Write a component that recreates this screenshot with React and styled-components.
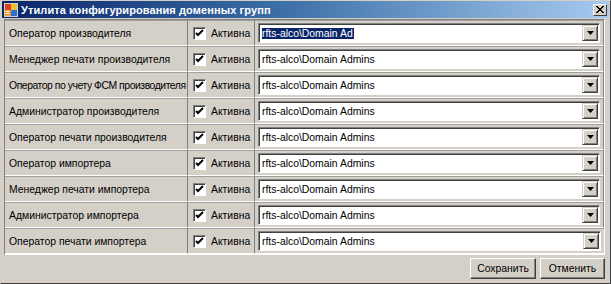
import React from "react";
import styled, { createGlobalStyle } from "styled-components";

const Global = createGlobalStyle`
  html, body { margin: 0; padding: 0; background: #d4d0c8; }
  body { font-family: "Liberation Sans", Arial, sans-serif; font-size: 10.4px; color: #000; }
`;

const Window = styled.div`
  width: 611px;
  height: 284px;
  box-sizing: border-box;
  background: #d4d0c8;
  border: 1px solid #d4d0c8;
  border-right-color: #404040;
  border-bottom-color: #404040;
  display: flex;
  flex-direction: column;
`;

const TitleBar = styled.div`
  height: 17px;
  margin: 0 1px;
  background: linear-gradient(to right, #0a246a, #3a6ea5 45%, #a6caf0);
  display: flex;
  align-items: center;
  padding: 0 2px;
  gap: 3px;
`;

const Title = styled.div`
  flex: 1;
  color: #fff;
  font-weight: bold;
  font-size: 11px;
  letter-spacing: 0.1px;
`;

const CloseBtn = styled.div`
  width: 14px;
  height: 12px;
  box-sizing: border-box;
  background: #d4d0c8;
  border: 1px solid;
  border-color: #fff #404040 #404040 #fff;
  display: flex;
  align-items: center;
  justify-content: center;
`;

const Body = styled.div`
  flex: 1;
  display: flex;
  flex-direction: column;
  padding: 1px 5px 4px 3px;
`;

const Grid = styled.div`
  border: 1px solid;
  border-color: #808080 #fff #fff #808080;
  display: grid;
  grid-template-columns: 183px 67px 1fr;
  grid-auto-rows: 26px;
`;

const Cell = styled.div`
  box-sizing: border-box;
  display: flex;
  align-items: center;
  white-space: nowrap;
  overflow: hidden;
  border-right: 1px solid #808080;
  border-bottom: 1px solid #fff;
  border-top: 1px solid #a0a0a0;
  padding: ${(p) => p.$pad || "0 4px"};
  &:last-child { border-right: none; }
`;

const Label = styled(Cell)`
  padding: 0 2px 0 4px;
  letter-spacing: ${(p) => (p.$tight ? "-0.45px" : "0")};
`;

const Check = styled.div`
  width: 13px;
  height: 13px;
  box-sizing: border-box;
  background: #fff;
  border: 1px solid;
  border-color: #808080 #fff #fff #808080;
  box-shadow: inset 1px 1px 0 #404040;
  display: flex;
  align-items: center;
  justify-content: center;
  margin-right: 5px;
`;

const Combo = styled.div`
  flex: 1;
  height: 20px;
  box-sizing: border-box;
  background: #fff;
  border: 1px solid;
  border-color: #808080 #fff #fff #808080;
  box-shadow: inset 1px 1px 0 #404040;
  display: flex;
  align-items: center;
  padding: 0 1px 0 3px;
`;

const ComboText = styled.div`
  flex: 1;
  display: flex;
`;

const Selected = styled.span`
  background: ${(p) => (p.$on ? "#0a246a" : "transparent")};
  color: ${(p) => (p.$on ? "#fff" : "#000")};
  padding-right: 1px;
`;

const DropBtn = styled.div`
  width: 16px;
  height: 16px;
  box-sizing: border-box;
  background: #d4d0c8;
  border: 1px solid;
  border-color: #d4d0c8 #404040 #404040 #d4d0c8;
  box-shadow: inset 1px 1px 0 #fff, inset -1px -1px 0 #808080;
  display: flex;
  align-items: center;
  justify-content: center;
`;

const Footer = styled.div`
  flex: 1;
  display: flex;
  justify-content: flex-end;
  align-items: center;
  gap: 4px;
  padding-top: 2px;
`;

const Button = styled.button`
  width: ${(p) => p.$w}px;
  height: 21px;
  font-family: "Liberation Sans", Arial, sans-serif;
  font-size: 10.4px;
  color: #000;
  background: #d4d0c8;
  border: 1px solid;
  border-color: #fff #404040 #404040 #fff;
  box-shadow: inset -1px -1px 0 #808080;
  padding: 0;
`;

const rows = [
  "Оператор производителя",
  "Менеджер печати производителя",
  "Оператор по учету ФСМ производителя",
  "Администратор производителя",
  "Оператор печати производителя",
  "Оператор импортера",
  "Менеджер печати импортера",
  "Администратор импортера",
  "Оператор печати импортера",
];

const AppIcon = () => (
  <svg width="14" height="14" viewBox="0 0 14 14">
    <rect x="0" y="0" width="14" height="14" fill="#d4d0c8" />
    <rect x="1" y="1" width="6" height="6" fill="#e04020" />
    <rect x="7" y="1" width="6" height="6" fill="#f0c030" />
    <rect x="1" y="7" width="6" height="6" fill="#f0a030" />
    <rect x="7" y="7" width="6" height="6" fill="#3070d0" />
    <rect x="2" y="8" width="3" height="1" fill="#fff" />
    <rect x="2" y="10" width="3" height="1" fill="#fff" />
  </svg>
);

export default function App() {
  return (
    <>
      <Global />
      <Window>
        <TitleBar>
          <AppIcon />
          <Title>Утилита конфигурирования доменных групп</Title>
          <CloseBtn>
            <svg width="8" height="7" viewBox="0 0 8 7">
              <path d="M0 0 L7 7 M1 0 L8 7 M7 0 L0 7 M8 0 L1 7" stroke="#000" strokeWidth="1" />
            </svg>
          </CloseBtn>
        </TitleBar>
        <Body>
          <Grid>
            {rows.map((name, i) => (
              <React.Fragment key={name}>
                <Label $tight={name.length > 30}>{name}</Label>
                <Cell $pad="0 0 0 5px">
                  <Check>
                    <svg width="9" height="9" viewBox="0 0 9 9">
                      <path d="M1 4 L3 6 L8 1" stroke="#000" strokeWidth="2" fill="none" />
                    </svg>
                  </Check>
                  Активна
                </Cell>
                <Cell $pad="0 3px 0 3px">
                  <Combo>
                    <ComboText>
                      <Selected $on={i === 0}>
                        {i === 0 ? "rfts-alco\\Domain Ad" : "rfts-alco\\Domain Admins"}
                      </Selected>
                    </ComboText>
                    <DropBtn>
                      <svg width="7" height="4" viewBox="0 0 7 4">
                        <path d="M0 0 H7 L3.5 4 Z" fill="#000" />
                      </svg>
                    </DropBtn>
                  </Combo>
                </Cell>
              </React.Fragment>
            ))}
          </Grid>
          <Footer>
            <Button $w={66}>Сохранить</Button>
            <Button $w={65}>Отменить</Button>
          </Footer>
        </Body>
      </Window>
    </>
  );
}
